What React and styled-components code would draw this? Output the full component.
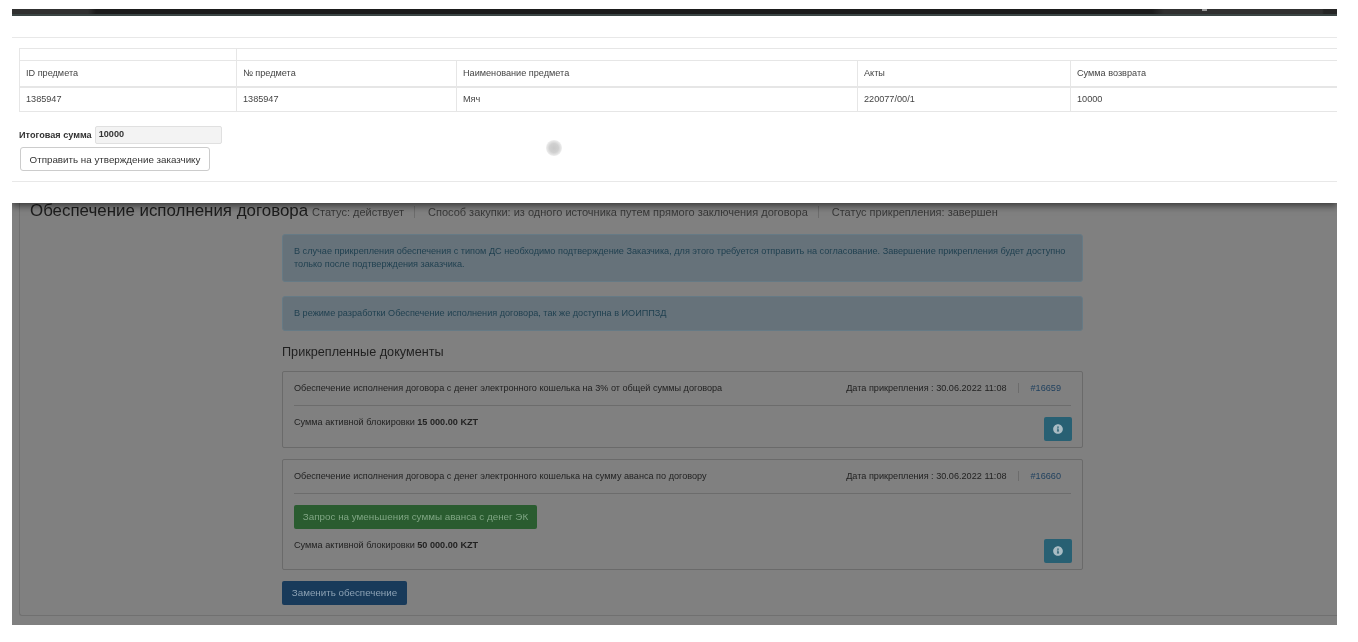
import React from "react";
import styled, { createGlobalStyle } from "styled-components";
import { FaInfoCircle } from "react-icons/fa";

const GlobalStyle = createGlobalStyle`
    html, body {
        margin: 0;
        background: #fff;
    }
    body {
        font-family: "Liberation Sans", Arial, sans-serif;
        font-size: 9.14px;
        color: #333;
    }
`;

const Frame = styled.div`
    width: 1325px;
    height: 616px;
    margin: 9px 0 0 12px;
    overflow: hidden;
    display: flex;
    flex-direction: column;
    filter: blur(0.35px);
`;

const TopStrip = styled.div`
    flex: none;
    height: 7px;
    position: relative;
    background:
        linear-gradient(90deg, #313131 0, #313131 76px, #1c1c1c 84px, #1c1c1c 1140px, #313131 1152px, #313131 1310px, #262626 1312px) top / 100% 5px no-repeat,
        #3f4a49;
`;

const StripNotch = styled.div`
    position: absolute;
    left: 1190px;
    top: 0;
    width: 5px;
    height: 2px;
    background: #999;
`;

const Modal = styled.div`
    flex: none;
    height: 187px;
    background: #fff;
    position: relative;
    z-index: 1;
    box-shadow: 0 3px 7px rgba(0, 0, 0, 0.55);
    padding-top: 21px;
    box-sizing: border-box;
`;

const ModalBody = styled.div`
    border-top: 1px solid #e8e8e8;
    border-bottom: 1px solid #e8e8e8;
    height: 145px;
    box-sizing: border-box;
    padding: 10px 0 0 7px;
`;

const Table = styled.table`
    border-collapse: collapse;
    table-layout: fixed;
    width: 1330px;
    color: #444;
`;

const Cell = styled.td`
    border: 1px solid #e6e6e6;
    padding: 0 6px;
    height: ${(p) => p.$h}px;
    box-sizing: border-box;
    border-bottom-width: ${(p) => (p.$head ? 2 : 1)}px;
`;

const TotalRow = styled.div`
    display: flex;
    align-items: center;
    gap: 3px;
    margin-top: 14px;
    font-weight: bold;
    color: #333;
`;

const TotalInput = styled.div`
    width: 127px;
    height: 18px;
    box-sizing: border-box;
    background: #f3f3f3;
    border: 1px solid #e0e0e0;
    border-radius: 2px;
    padding: 0 3px;
    line-height: 15px;
`;

const SendButton = styled.button`
    display: block;
    margin: 3px 0 0 1px;
    width: 190px;
    height: 24px;
    padding: 0;
    background: #fff;
    border: 1px solid #ccc;
    border-radius: 3px;
    font: 9.8px "Liberation Sans", Arial, sans-serif;
    color: #333;
`;

const Spinner = styled.div`
    position: absolute;
    left: 534px;
    top: 124px;
    width: 16px;
    height: 16px;
    border-radius: 50%;
    background: radial-gradient(circle, #c8c8c8 0, #d0d0d0 40%, #eee 70%, #fff 100%);
`;

const Backdrop = styled.div`
    flex: 1;
    min-height: 0;
    background: #808080;
    color: #222;
    padding: 0 0 9px 7px;
    display: flex;
    flex-direction: column;
`;

const Panel = styled.div`
    flex: 1;
    border: 1px solid #707070;
    border-top: 0;
    border-right: 0;
    border-radius: 0 0 0 3px;
    padding-left: 10px;
`;

const TitleRow = styled.div`
    display: flex;
    align-items: baseline;
    height: 33px;
    margin-top: -2px;
    color: #383838;
    font-size: 11px;
`;

const Title = styled.h1`
    margin: 0 4px 0 0;
    font-size: 16.9px;
    font-weight: normal;
    color: #1c1c1c;
    line-height: 20px;
`;

const Meta = styled.span`
    border-left: ${(p) => (p.$first ? "0" : "1px solid #6c6c6c")};
    padding: 0 10px 0 ${(p) => (p.$first ? 0 : 13)}px;
`;

const Content = styled.div`
    width: 801px;
    margin-left: 252px;
`;

const Alert = styled.div`
    box-sizing: border-box;
    background: #66727a;
    border: 1px solid #667a85;
    border-radius: 3px;
    color: #1e3f4f;
    padding: 10px 11px 0;
    line-height: 13px;
    margin-bottom: 14px;
    height: ${(p) => p.$h}px;
`;

const SectionTitle = styled.h2`
    margin: 0 0 12px;
    font-size: 12.67px;
    line-height: 14px;
    font-weight: normal;
    color: #1f1f1f;
`;

const Card = styled.div`
    box-sizing: border-box;
    height: ${(p) => p.$h}px;
    border: 1px solid #6a6a6a;
    border-radius: 2px;
    padding: 0 11px;
    margin-bottom: 11px;
    position: relative;
`;

const CardHead = styled.div`
    display: flex;
    align-items: center;
    justify-content: space-between;
    box-sizing: border-box;
    height: 34px;
    padding-bottom: 2px;
    border-bottom: 1px solid #6c6c6c;
    color: #222;
`;

const CardDate = styled.span`
    display: flex;
    align-items: center;
    height: 13px;
`;

const CardId = styled.a`
    color: #1d3f5e;
    border-left: 1px solid #6c6c6c;
    margin-left: 11px;
    padding: 0 10px 0 12px;
`;

const CardBody = styled.div`
    padding-top: 11px;
    color: #222;
`;

const GreenButton = styled.div`
    width: 243px;
    height: 24px;
    background: #2a5c30;
    border-radius: 2px;
    color: #7fa583;
    font-size: 9.84px;
    line-height: 24px;
    text-align: center;
    margin-bottom: 11px;
`;

const InfoButton = styled.div`
    position: absolute;
    right: 10px;
    bottom: 6px;
    width: 28px;
    height: 24px;
    background: #286073;
    border-radius: 2px;
    color: #a9bcc4;
    display: flex;
    align-items: center;
    justify-content: center;
    font-size: 10px;
`;

const BlueButton = styled.div`
    width: 125px;
    height: 24px;
    background: #183a5a;
    border-radius: 2px;
    color: #8ba0b3;
    font-size: 9.8px;
    line-height: 24px;
    text-align: center;
`;

const columns = [217, 220, 401, 213, 279];
const headers = ["ID предмета", "№ предмета", "Наименование предмета", "Акты", "Сумма возврата"];
const values = ["1385947", "1385947", "Мяч", "220077/00/1", "10000"];

const Attachment = ({ h, text, id, amount, action }) => (
    <Card $h={h}>
        <CardHead>
            <span>{text}</span>
            <CardDate>
                Дата прикрепления : 30.06.2022 11:08
                <CardId>{id}</CardId>
            </CardDate>
        </CardHead>
        <CardBody>
            {action && <GreenButton>{action}</GreenButton>}
            Сумма активной блокировки <b>{amount} KZT</b>
        </CardBody>
        <InfoButton>
            <FaInfoCircle />
        </InfoButton>
    </Card>
);

export default function App() {
    return (
        <Frame>
            <GlobalStyle />
            <TopStrip>
                <StripNotch />
            </TopStrip>
            <Modal>
                <ModalBody>
                    <Table>
                        <colgroup>
                            {columns.map((w, i) => (
                                <col key={i} style={{ width: w }} />
                            ))}
                        </colgroup>
                        <tbody>
                            <tr>
                                <Cell $h={12} />
                                <Cell $h={12} colSpan={4} />
                            </tr>
                            <tr>
                                {headers.map((t) => (
                                    <Cell key={t} $h={26} $head>
                                        {t}
                                    </Cell>
                                ))}
                            </tr>
                            <tr>
                                {values.map((t, i) => (
                                    <Cell key={i} $h={25}>
                                        {t}
                                    </Cell>
                                ))}
                            </tr>
                        </tbody>
                    </Table>
                    <TotalRow>
                        Итоговая сумма
                        <TotalInput>10000</TotalInput>
                    </TotalRow>
                    <SendButton>Отправить на утверждение заказчику</SendButton>
                    <Spinner />
                </ModalBody>
            </Modal>
            <Backdrop>
                <Panel>
                    <TitleRow>
                        <Title>Обеспечение исполнения договора</Title>
                        <Meta $first>Статус: действует</Meta>
                        <Meta>Способ закупки: из одного источника путем прямого заключения договора</Meta>
                        <Meta>Статус прикрепления: завершен</Meta>
                    </TitleRow>
                    <Content>
                        <Alert $h={48}>
                            В случае прикрепления обеспечения с типом ДС необходимо подтверждение Заказчика, для этого требуется отправить на согласование. Завершение прикрепления будет доступно только после подтверждения заказчика.
                        </Alert>
                        <Alert $h={35}>В режиме разработки Обеспечение исполнения договора, так же доступна в ИОИППЗД</Alert>
                        <SectionTitle>Прикрепленные документы</SectionTitle>
                        <Attachment
                            h={77}
                            text="Обеспечение исполнения договора с денег электронного кошелька на 3% от общей суммы договора"
                            id="#16659"
                            amount="15 000.00"
                        />
                        <Attachment
                            h={111}
                            text="Обеспечение исполнения договора с денег электронного кошелька на сумму аванса по договору"
                            id="#16660"
                            amount="50 000.00"
                            action="Запрос на уменьшения суммы аванса с денег ЭК"
                        />
                        <BlueButton>Заменить обеспечение</BlueButton>
                    </Content>
                </Panel>
            </Backdrop>
        </Frame>
    );
}
